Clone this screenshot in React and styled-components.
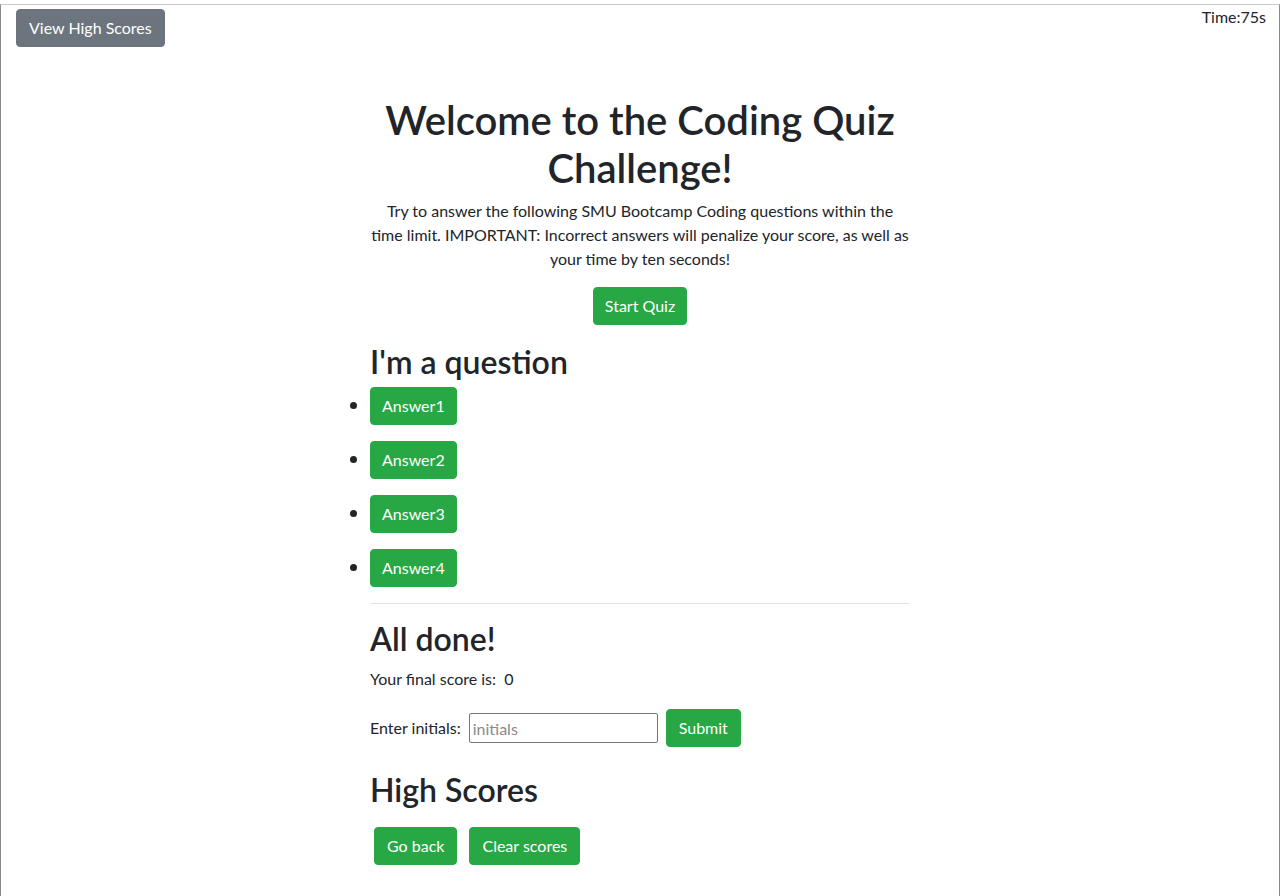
import React from "react";
import styled, { createGlobalStyle } from "styled-components";

const GlobalStyle = createGlobalStyle`
  html, body {
    margin: 0;
    padding: 0;
    background: #fff;
  }
  body {
    font-family: Lato, "Liberation Sans", sans-serif;
    font-size: 16px;
    line-height: 1.5;
    color: #212529;
  }
  * {
    box-sizing: border-box;
  }
`;

const Frame = styled.div`
  margin-top: 4px;
  min-height: 892px;
  border-top: 1px solid #c8c8c8;
  border-left: 1px solid #8a8a8a;
  border-right: 1px solid #8a8a8a;
`;

const TopBar = styled.header`
  display: flex;
  justify-content: space-between;
  align-items: flex-start;
  padding: 0 13px 0 15px;
`;

const Timer = styled.div`
  font-size: 16px;
  line-height: 24px;
`;

const Button = styled.button`
  display: inline-block;
  font-family: inherit;
  font-size: 16px;
  line-height: 24px;
  padding: 6px ${(p) => p.$padX || "11px"};
  border: 1px solid ${(p) => (p.$variant === "secondary" ? "#6c757d" : "#28a745")};
  background: ${(p) => (p.$variant === "secondary" ? "#6c757d" : "#28a745")};
  color: #fff;
  border-radius: 4px;
  cursor: pointer;
  margin: ${(p) => p.$margin || "0"};
`;

const Main = styled.main`
  width: 540px;
  margin: 0 auto;
  padding-top: 49px;
`;

const Intro = styled.section`
  text-align: center;
`;

const Title = styled.h1`
  font-size: 40px;
  font-weight: 600;
  line-height: 48px;
  margin: 0 0 7px;
`;

const Lead = styled.p`
  margin: 0 0 16px;
`;

const Heading = styled.h2`
  font-size: 32px;
  font-weight: 600;
  line-height: 38px;
  margin: ${(p) => p.$margin || "0 0 9px"};
`;

const AnswerList = styled.ul`
  margin: 0;
  padding: 0;
  list-style: disc outside;
`;

const AnswerItem = styled.li`
  margin-bottom: 16px;
  height: 38px;
  &::marker {
    font-size: 20px;
  }
`;

const Divider = styled.hr`
  border: 0;
  border-top: 1px solid #e2e2e2;
  margin: 0 0 16px;
`;

const Text = styled.p`
  margin: 0 0 18px;
`;

const Form = styled.form`
  display: flex;
  align-items: center;
`;

const Label = styled.label`
  margin-right: 8px;
`;

const Input = styled.input`
  width: 189px;
  height: 30px;
  font-family: inherit;
  font-size: 16px;
  padding: 1px 3px;
  border: 1px solid #767676;
  border-radius: 2px;
  margin-right: 8px;
  &::placeholder {
    color: #8a8a8a;
  }
`;

const ButtonRow = styled.div`
  display: flex;
  gap: 12px;
  padding-left: 4px;
`;

const answers = ["Answer1", "Answer2", "Answer3", "Answer4"];

export default function App() {
  return (
    <>
      <GlobalStyle />
      <Frame>
        <TopBar>
          <Button $variant="secondary" $margin="4px 0 0" $padX="12px">View High Scores</Button>
          <Timer>Time:75s</Timer>
        </TopBar>
        <Main>
          <Intro>
            <Title>
              Welcome to the Coding Quiz
              <br />
              Challenge!
            </Title>
            <Lead>
              Try to answer the following SMU Bootcamp Coding questions within the
              time limit. IMPORTANT: Incorrect answers will penalize your score, as well as
              your time by ten seconds!
            </Lead>
            <Button>Start Quiz</Button>
          </Intro>

          <Heading $margin="18px 0 6px">I'm a question</Heading>
          <AnswerList>
            {answers.map((a) => (
              <AnswerItem key={a}>
                <Button>{a}</Button>
              </AnswerItem>
            ))}
          </AnswerList>

          <Divider />

          <Heading>All done!</Heading>
          <Text>Your final score is:&nbsp; 0</Text>
          <Form onSubmit={(e) => e.preventDefault()}>
            <Label htmlFor="initials">Enter initials:</Label>
            <Input id="initials" placeholder="initials" />
            <Button type="submit" $padX="12px">Submit</Button>
          </Form>

          <Heading $margin="24px 0 18px">High Scores</Heading>
          <ButtonRow>
            <Button $padX="12px">Go back</Button>
            <Button $padX="12px">Clear scores</Button>
          </ButtonRow>
        </Main>
      </Frame>
    </>
  );
}
